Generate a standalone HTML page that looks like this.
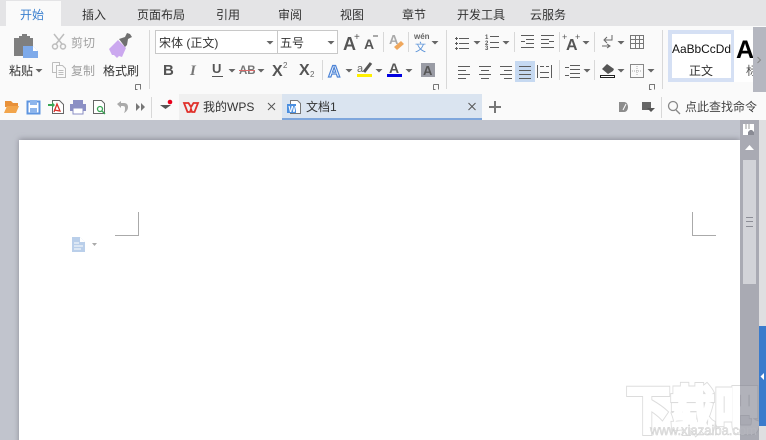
<!DOCTYPE html>
<html lang="zh"><head><meta charset="utf-8"><title>WPS</title>
<style>
html,body{margin:0;padding:0;width:766px;height:440px;overflow:hidden;background:#fafafa}
svg{display:block}
text{font-family:"Liberation Sans","Noto Sans CJK SC",sans-serif}
.t{font-size:12px;fill:#333}
.g{font-size:12px;fill:#a0a0a0}
.ltr{font-weight:bold;fill:#555}
.ln{stroke:#5c5c5c;stroke-width:1;fill:none;shape-rendering:crispEdges}
.sep{stroke:#d8d8d8;stroke-width:1;shape-rendering:crispEdges}
</style></head><body>
<svg width="766" height="440" viewBox="0 0 766 440" xmlns="http://www.w3.org/2000/svg">
<defs>
<symbol id="c" overflow="visible"><path d="M-3.500 0h7l-3.500 3.500z" fill="#666"/></symbol>
<symbol id="l" overflow="visible"><path d="M0.500 0.500h5v5M0.500 0.500v5h2" fill="none" stroke="#777"/></symbol>
<filter id="sh" x="-5%" y="-5%" width="110%" height="110%"><feGaussianBlur stdDeviation="3"/></filter>
<clipPath id="pg"><rect x="0" y="370" width="740" height="70"/></clipPath>
<clipPath id="sb"><rect x="740" y="370" width="19" height="70"/></clipPath>
</defs>
<!-- tabs -->
<rect width="766" height="26" fill="#e4e4e6"/>
<rect x="0" y="26" width="766" height="94" fill="#fafafa"/>
<rect x="6" y="1" width="55" height="25" fill="#fafafa"/>
<g class="t" text-anchor="middle">
<text x="32" y="19" style="fill:#3b80cf">开始</text>
<text x="94" y="19">插入</text><text x="161" y="19">页面布局</text><text x="228" y="19">引用</text>
<text x="290" y="19">审阅</text><text x="352" y="19">视图</text><text x="414" y="19">章节</text>
<text x="481" y="19">开发工具</text><text x="548" y="19">云服务</text>
</g>
<!-- clipboard group -->
<path d="M14 38h5v-2h3v-2h5v2h3v2h3v8H23v10h-9z" fill="#7f7f7f"/>
<path d="M23 46h10l5 5v7H23z" fill="#7eaaea"/><path d="M33 46v5h5z" fill="#fff"/>
<text class="t" x="9" y="75">粘贴</text><use href="#c" x="39" y="69"/>
<g fill="none" stroke="#bdbdbd" stroke-width="1.500"><path d="M54 34l8 10M64 34l-8 10"/><circle cx="55" cy="46.500" r="2.500"/><circle cx="63" cy="46.500" r="2.500"/></g>
<text class="g" x="71" y="47">剪切</text>
<path d="M52.500 62.500h7v3M56.500 65.500h6l3 3v9h-9zM52.500 62.500v10h4M58.500 70.500h5M58.500 72.500h5M58.500 74.500h5" fill="none" stroke="#bdbdbd"/>
<text class="g" x="71" y="75">复制</text>
<path d="M109 49l9-9 8 8-4 9-3-1-2 2-3-3-2 0z" fill="#cba8ef"/>
<path d="M119 39l6-2 2-4 3 1 2 3-4 2-1 6-2 2z" fill="#707070"/>
<text class="t" x="103" y="75">格式刷</text>
<use href="#l" x="135" y="84"/>
<line class="sep" x1="149.500" y1="30" x2="149.500" y2="89"/>
<!-- font boxes -->
<rect x="155.500" y="30.500" width="122" height="23" fill="#fff" stroke="#c8c8c8"/>
<rect x="277.500" y="30.500" width="60" height="23" fill="#fff" stroke="#c8c8c8"/>
<text class="t" x="159" y="47">宋体 (正文)</text>
<text class="t" x="280" y="47">五号</text>
<use href="#c" x="270" y="41"/><use href="#c" x="331" y="41"/>
<text class="ltr" x="343" y="50" font-size="18">A</text><text x="354" y="40" font-size="10" fill="#555">+</text>
<text class="ltr" x="364" y="49" font-size="14">A</text><path d="M373 36h5" stroke="#555"/>
<line class="sep" x1="383.500" y1="32" x2="383.500" y2="52"/>
<text x="389" y="44" font-size="13" fill="#aaa" font-weight="bold">A</text>
<path d="M394 47l7-6 3 3-7 6z" fill="#efa75c"/>
<line class="sep" x1="408.500" y1="32" x2="408.500" y2="52"/>
<text x="414" y="39" font-size="8" fill="#666" font-weight="bold">wén</text>
<text x="415" y="51" font-size="11" fill="#5d94d8">文</text>
<use href="#c" x="435" y="41"/>
<!-- row 2 font -->
<text class="ltr" x="163" y="75" font-size="15">B</text>
<text x="190" y="75" font-size="15" fill="#777" font-style="italic" font-weight="bold" style="font-family:'Liberation Serif',serif">I</text>
<text class="ltr" x="212" y="73" font-size="13">U</text><path d="M212 76.500h11" stroke="#555"/>
<use href="#c" x="232" y="69"/>
<text class="ltr" x="239" y="74" font-size="11.500" style="fill:#777">AB</text><path d="M239 70.500h16" stroke="#d86a6a"/>
<use href="#c" x="261" y="69"/>
<text class="ltr" x="272" y="76" font-size="16">X</text><text x="283" y="68" font-size="8" fill="#666">2</text>
<text class="ltr" x="299" y="75" font-size="16">X</text><text x="310" y="77" font-size="8" fill="#666">2</text>
<line class="sep" x1="322.500" y1="60" x2="322.500" y2="80"/>
<text x="328" y="77" font-size="17" font-weight="bold" fill="#fff" stroke="#4d84d6" stroke-width="1.200">A</text>
<use href="#c" x="349" y="69"/>
<text x="357" y="72" font-size="11" fill="#666">a</text><path d="M364 72l7-9" stroke="#555" stroke-width="3"/>
<rect x="357" y="74" width="15" height="3" fill="#fff000"/><use href="#c" x="379" y="69"/>
<text class="ltr" x="389" y="73" font-size="14">A</text><rect x="387" y="74" width="15" height="3" fill="#0000e0"/><use href="#c" x="409" y="69"/>
<rect x="421" y="63" width="14" height="14" fill="#9a9ca5"/><text x="423" y="75" font-size="13" font-weight="bold" fill="#555">A</text>
<use href="#l" x="433" y="84"/>
<line class="sep" x1="446.500" y1="30" x2="446.500" y2="89"/>
<!-- paragraph row 1 -->
<g class="ln">
<path d="M459 38.500h10M459 43.500h10M459 48.500h10M455 38.500h3M456.500 37v3M455 43.500h3M456.500 42v3M455 48.500h3M456.500 47v3"/>
<path d="M490 36.500h9M490 42.500h9M490 47.500h9"/>
<path d="M521 35.500h13M526 39.500h8M526 43.500h8M521 47.500h13M521 41.500h4"/>
<path d="M541 35.500h13M541 39.500h8M541 43.500h8M541 47.500h13M549 41.500h5"/>
</g>
<text x="485" y="39" font-size="6" font-weight="bold" fill="#555">1</text><text x="485" y="45" font-size="6" font-weight="bold" fill="#555">2</text><text x="485" y="50" font-size="6" font-weight="bold" fill="#555">3</text>
<use href="#c" x="477" y="41"/><use href="#c" x="506" y="41"/>
<line class="sep" x1="514.500" y1="32" x2="514.500" y2="52"/>
<line class="sep" x1="559.500" y1="32" x2="559.500" y2="52"/>
<text class="ltr" x="566" y="50" font-size="16">A</text><text x="562" y="40" font-size="9" fill="#555">+</text><text x="575" y="40" font-size="9" fill="#555">+</text>
<use href="#c" x="586" y="41"/>
<line class="sep" x1="594.500" y1="32" x2="594.500" y2="52"/>
<path d="M612 35v5h-7M607 37l-3 3 3 3M602 46h7M607 44l3 2-3 2" fill="none" stroke="#666"/>
<use href="#c" x="621" y="41"/>
<path d="M630.500 35.500h13v13h-13zM630.500 39.500h13M630.500 43.500h13M635.500 35.500v13M639.500 35.500v13" fill="none" stroke="#777" shape-rendering="crispEdges"/>
<line class="sep" x1="662.500" y1="30" x2="662.500" y2="89"/>
<!-- paragraph row 2 -->
<rect x="515" y="61" width="20" height="21" fill="#c6d9f1"/>
<g class="ln">
<path d="M458 66.500h12M458 70.500h8M458 74.500h12M458 78.500h8"/>
<path d="M479 66.500h12M481 70.500h8M479 74.500h12M481 78.500h8"/>
<path d="M500 66.500h12M504 70.500h8M500 74.500h12M504 78.500h8"/>
<path d="M519 66.500h12M519 70.500h12M519 74.500h12M519 78.500h12"/>
<path d="M537.500 65v13M551.500 65v13M540 72.500h9M540 77.500h9M540 66.500h4M546 66.500h3"/>
<path d="M570 65.500h10M570 69.500h10M570 73.500h10M570 77.500h10M565 67.500h4M565 75.500h4"/>
</g>
<use href="#c" x="587" y="69"/>
<line class="sep" x1="559.500" y1="60" x2="559.500" y2="80"/>
<line class="sep" x1="594.500" y1="60" x2="594.500" y2="80"/>
<path d="M602 69l5-5 7 5-1 2-5 3z" fill="#555"/><rect x="600.500" y="75.500" width="14" height="2" fill="#fff" stroke="#222"/>
<use href="#c" x="621" y="69"/>
<rect x="630.500" y="64.500" width="13" height="13" fill="none" stroke="#888"/><path d="M637 66v10M632 71h10" stroke="#aaa" stroke-dasharray="1 1"/>
<use href="#c" x="651" y="69"/><use href="#l" x="649" y="84"/>
<!-- styles -->
<rect x="668" y="30" width="66" height="52" fill="#d5e0f4"/>
<rect x="672" y="34" width="59" height="44" fill="#fff"/>
<rect x="734" y="30" width="19" height="52" fill="#fff"/>
<text x="672" y="53" font-size="12" fill="#111" textLength="59" lengthAdjust="spacingAndGlyphs">AaBbCcDd</text>
<text class="t" x="689" y="75">正文</text>
<svg x="734" y="30" width="19" height="52"><text x="2" y="28" font-size="25" font-weight="bold" fill="#000">A</text><text x="12" y="45" font-size="12" fill="#555">标</text></svg>
<rect x="753" y="27" width="13" height="65" fill="#b5b7c0"/>
<path d="M757.500 57l3 3-3 3" fill="none" stroke="#888"/>
<!-- quick bar -->
<path d="M5 107v-6h6l2 2h5v4z" fill="#e8913a"/><path d="M4 113l3-7h12l-3 7z" fill="#f2a54c"/>
<path d="M27.500 101.500h12v12h-12z" fill="#fff" stroke="#5f95e0" stroke-width="2"/><rect x="30" y="100" width="7" height="5" fill="#8db5ec"/><rect x="30" y="108" width="7" height="5" fill="#8db5ec"/>
<path d="M52.500 100.500h7l4 4v9h-11z" fill="#fff" stroke="#666"/><path d="M48 104h4v-2l3 3-3 3v-2h-4z" fill="#3aa655"/><path d="M54 112l3-8 3 7-6-1" fill="none" stroke="#d9332b" stroke-width="1.300"/>
<rect x="73" y="100" width="10" height="4" fill="#8b8fc4"/><rect x="70" y="104" width="16" height="7" fill="#8b8fc4"/><rect x="73" y="108" width="10" height="6" fill="#fff" stroke="#8b8fc4"/>
<path d="M93.500 100.500h8l3 3v10h-11z" fill="#fff" stroke="#666"/><circle cx="100" cy="109" r="2.500" fill="none" stroke="#3aa655" stroke-width="1.300"/><path d="M102 111l3 3" stroke="#3aa655" stroke-width="1.300"/>
<path d="M117 104l4-3v2h3c3 0 4 2 4 4 0 3-2 5-4 6 1-2 1-3 1-5 0-2-1-2-4-2v2z" fill="#aaa"/>
<path d="M136 103l4 4-4 4zM141 103l4 4-4 4z" fill="#777"/>
<line class="sep" x1="151.500" y1="97" x2="151.500" y2="118"/>
<path d="M160 105h11l-5.500 4z" fill="#555"/><circle cx="170" cy="102" r="2.300" fill="#e8001c"/>
<rect x="179" y="94" width="103" height="26" fill="#f0f0f0"/>
<path d="M184 103l4.500 0 2.500 4 2.500-4 4.500 0-3.500 9h-2.500l-1-3-1 3h-2.500z" fill="none" stroke="#e0302a" stroke-width="1.800"/>
<text class="t" x="203" y="111">我的WPS</text>
<path d="M268 103l7 7M275 103l-7 7" stroke="#555"/>
<rect x="282" y="94" width="200" height="24" fill="#dae4f0"/><rect x="282" y="118" width="200" height="2" fill="#7ea6dc"/>
<path d="M290.500 100.500h7l3 3v10h-10z" fill="#fff" stroke="#777"/><rect x="287" y="104" width="9" height="9" fill="#4b8fe0"/><text x="288.500" y="112" font-size="8" fill="#fff" font-weight="bold">W</text>
<text class="t" x="306" y="111">文档1</text>
<path d="M468.500 103l7 7M475.500 103l-7 7" stroke="#555"/>
<path d="M495 101v12M489 107h12" stroke="#777" stroke-width="2"/>
<path d="M619 102h5c3 0 4 3 4 5s-1 5-4 5h-5z" fill="#8c8c8c"/><path d="M623 110l3-6" stroke="#fff"/>
<rect x="642" y="102" width="9" height="8" fill="#666"/><path d="M647 108h8l-4 4z" fill="#555"/>
<line class="sep" x1="661.500" y1="97" x2="661.500" y2="118"/>
<circle cx="673" cy="106" r="4.500" fill="none" stroke="#888" stroke-width="1.300"/><path d="M676 110l4 4" stroke="#888" stroke-width="1.300"/>
<text class="t" x="685" y="111" style="fill:#444">点此查找命令</text>
<!-- document area -->
<rect x="0" y="120" width="766" height="320" fill="#c1c4cd"/>
<rect x="19" y="139" width="721" height="310" fill="#8a8c96" filter="url(#sh)"/>
<rect x="19" y="140" width="721" height="300" fill="#fff"/>
<path d="M138.500 212v24M115 235.500h24M692.500 212v24M692 235.500h24" stroke="#aaa" stroke-width="1" fill="none" shape-rendering="crispEdges"/>
<path d="M72 237h8l5 5v10H72z" fill="#bacfea"/><path d="M80 237v5h5z" fill="#fff"/>
<path d="M74 243h5M74 246h9M74 249h7" stroke="#fff"/>
<path d="M92 243h5l-2.500 3z" fill="#aaa"/>
<!-- scrollbar -->
<rect x="740" y="120" width="19" height="320" fill="#a9aab3"/>
<rect x="759" y="120" width="7" height="320" fill="#dfdfe1"/>
<rect x="759" y="326" width="7" height="100" fill="#3a7bcc"/>
<path d="M764 373v7l-3.500-3.500z" fill="#fff"/>
<rect x="743" y="124" width="11" height="11" fill="#fff"/><path d="M746 124v5M749 124v5" stroke="#999"/><path d="M748 135v-3l2-2h2l2 2v3z" fill="#8a8b94"/>
<path d="M745 150l4.500-5 4.500 5z" fill="#fff"/>
<rect x="743" y="160" width="13" height="124" fill="#d2d3d8"/>
<path d="M746 217.500h7M746 221.500h7M746 226.500h7" stroke="#8c8d96" shape-rendering="crispEdges"/>
<!-- watermark -->
<g clip-path="url(#pg)">
<text x="626" y="429" font-size="52" font-weight="bold" fill="none" stroke="#dcdcdc" stroke-width="5" textLength="133" lengthAdjust="spacingAndGlyphs">下载吧</text>
<text x="626" y="429" font-size="52" font-weight="bold" fill="#fff" stroke="#fff" stroke-width="3" textLength="133" lengthAdjust="spacingAndGlyphs">下载吧</text>
<text x="650" y="435" font-size="14" fill="#ececec" stroke="#cdcdcd" stroke-width=".5" textLength="107" lengthAdjust="spacingAndGlyphs">www.xiazaiba.com</text>
</g>
<g clip-path="url(#sb)" opacity=".3">
<text x="626" y="429" font-size="52" font-weight="bold" fill="none" stroke="#8b8c95" stroke-width="5" textLength="133" lengthAdjust="spacingAndGlyphs">下载吧</text>
<text x="626" y="429" font-size="52" font-weight="bold" fill="#c4c5cb" stroke="#c4c5cb" stroke-width="3" textLength="133" lengthAdjust="spacingAndGlyphs">下载吧</text>
<text x="650" y="435" font-size="14" fill="#d0d0d4" textLength="107" lengthAdjust="spacingAndGlyphs">www.xiazaiba.com</text>
</g>
</svg>
</body></html>
